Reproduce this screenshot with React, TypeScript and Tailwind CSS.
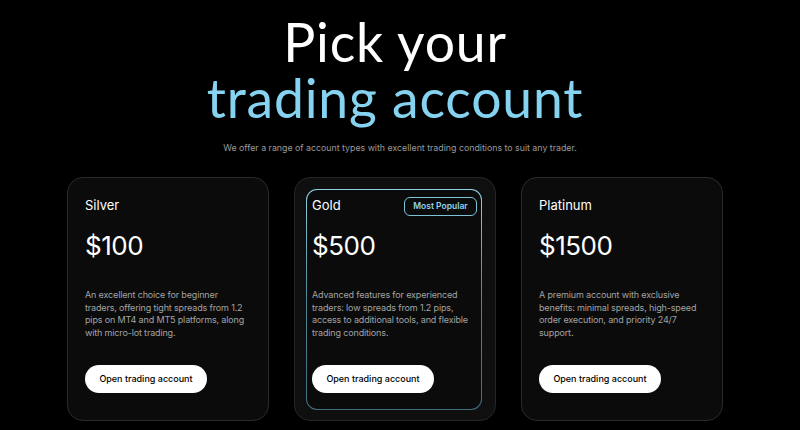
const plans = [
  {
    name: "Silver",
    price: "$100",
    text: "An excellent choice for beginner traders, offering tight spreads from 1.2 pips on MT4 and MT5 platforms, along with micro-lot trading.",
  },
  {
    name: "Gold",
    price: "$500",
    text: "Advanced features for experienced traders: low spreads from 1.2 pips, access to additional tools, and flexible trading conditions.",
    popular: true,
  },
  {
    name: "Platinum",
    price: "$1500",
    text: "A premium account with exclusive benefits: minimal spreads, high-speed order execution, and priority 24/7 support.",
  },
];

function CardBody({ plan }: { plan: (typeof plans)[number] }) {
  return (
    <div className="flex flex-col h-full">
      <div className="flex items-center justify-between h-[20px]">
        <span className="text-[13px] text-white">{plan.name}</span>
        {plan.popular && (
          <span className="border border-[#7cc3d8] rounded-md w-[73px] justify-center h-[19px] flex items-center text-[8.5px] font-semibold text-[#8fd3ea]">
            Most Popular
          </span>
        )}
      </div>
      <div className="mt-[15px] text-[26px] leading-[30px] text-white tracking-[-0.5px]">
        {plan.price}
      </div>
      <p className="mt-[28px] text-[9px] leading-[12.5px] tracking-[-0.15px] text-[#a3a3a3]">
        {plan.text}
      </p>
      <div className="mt-auto">
        <button className="bg-white text-black rounded-full h-[28px] w-[122px] text-[9px] font-medium">
          Open trading account
        </button>
      </div>
    </div>
  );
}

export default function App() {
  return (
    <div
      className="bg-black w-[800px] h-[430px] overflow-hidden flex flex-col items-center"
      style={{ fontFamily: "Inter, 'Liberation Sans', sans-serif" }}
    >
      <h1
        className="mt-[13px] mr-[10px] text-center text-[53.5px] leading-[56px] tracking-[0.8px]"
        style={{ fontFamily: "Lato, 'Noto Sans', sans-serif" }}
      >
        <span className="block text-white">Pick your</span>
        <span className="block text-[#86d3f1]">trading account</span>
      </h1>
      <p className="mt-[16px] text-[8.8px] text-[#9a9a9a]">
        We offer a range of account types with excellent trading conditions to suit any trader.
      </p>
      <div className="mt-[23px] mr-[10px] flex gap-[25px]">
        {plans.map((plan) =>
          plan.popular ? (
            <div
              key={plan.name}
              className="w-[202px] h-[244px] rounded-[16px] border border-[#262626] bg-[#0f0f0f] pt-[11px] pb-[10px] pl-[11px] pr-[13px]"
            >
              <div className="h-full rounded-[11px] p-px bg-gradient-to-b from-[#8fd0e2] via-[#4f8796] to-[#3f6f7c]">
                <div className="h-full rounded-[10px] bg-[#0b0b0b] pt-[6px] pb-[16px] pl-[5px] pr-[4px]">
                  <CardBody plan={plan} />
                </div>
              </div>
            </div>
          ) : (
            <div
              key={plan.name}
              className="w-[202px] h-[244px] rounded-[16px] border border-[#2b2b2b] bg-[#0b0b0b] pt-[18px] pb-[27px] px-[17px]"
            >
              <CardBody plan={plan} />
            </div>
          )
        )}
      </div>
    </div>
  );
}
